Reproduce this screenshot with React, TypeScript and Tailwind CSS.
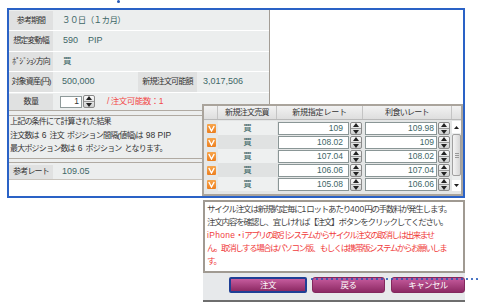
import React from 'react';

const font = "font-['Liberation_Sans','Noto_Sans_CJK_JP',sans-serif]";

function Spin({ className = '' }: { className?: string }) {
  return (
    <span className={`flex flex-col items-center justify-center rounded-[2px] border border-[#8a8a8a] bg-gradient-to-b from-[#fafafa] to-[#cfd1d1] ${className}`}>
      <svg width="6" height="4" viewBox="0 0 6 4"><path d="M3 0 L6 4 L0 4 Z" fill="#222" /></svg>
      <span className="my-[1px] h-px w-full bg-[#9a9a9a]" />
      <svg width="6" height="4" viewBox="0 0 6 4"><path d="M0 0 L6 0 L3 4 Z" fill="#222" /></svg>
    </span>
  );
}

function Check() {
  return (
    <span className="flex h-[9px] w-[9px] items-center justify-center rounded-[1px] bg-gradient-to-b from-[#f7a64c] to-[#ec7e1c]">
      <svg width="7" height="7" viewBox="0 0 7 7">
        <path d="M0.8 1 L3.5 6 L6.2 1" stroke="#fff" strokeWidth="1.4" fill="none" />
      </svg>
    </span>
  );
}

function Row({ label, h, children }: { label: string; h: string; children: React.ReactNode }) {
  return (
    <div className={`flex border-b border-white ${h}`}>
      <div className="flex w-[44px] items-center justify-center bg-[#e0e1e1] text-[8px] tracking-[-0.9px] text-[#333]">{label}</div>
      {children}
    </div>
  );
}

// latin text inside tightly tracked japanese lines
function N({ children, className = '' }: { children: React.ReactNode; className?: string }) {
  return <span className={`tracking-normal ${className}`}>{children}</span>;
}

const rows = [
  ['109', '109.98'],
  ['108.02', '109'],
  ['107.04', '108.02'],
  ['106.06', '107.04'],
  ['105.08', '106.06'],
];

export default function App() {
  return (
    <div className={`relative h-[308px] w-[478px] overflow-hidden bg-white pl-[7px] pt-[8px] ${font}`}>
      {/* dot at top */}
      <span className="absolute left-[117px] top-0 h-[3px] w-[3px] rounded-full bg-[#2458b8]" />

      {/* blue frame */}
      <div className="relative h-[190px] w-[458px] border-2 border-[#2a62c6]">
        {/* left form panel */}
        <div className="w-[261px] border-r border-[#a39d95] bg-[#eceeee] pt-[1px]">
          <Row label="参考期間" h="h-[20px]">
            <div className="flex items-center pl-[9px] text-[8.5px] tracking-[-0.6px] text-[#3e6767]">３０日（１カ月）</div>
          </Row>
          <Row label="想定変動幅" h="h-[21px]">
            <div className="flex items-center pl-[10px] text-[9px] text-[#3e6767]">
              590<span className="ml-[10px]">PIP</span>
            </div>
          </Row>
          <Row label="ﾎﾟｼﾞｼｮﾝ方向" h="h-[20px]">
            <div className="flex items-center pl-[10px] text-[8.5px] text-[#3e6767]">買</div>
          </Row>
          <Row label="対象資産(円)" h="h-[21px]">
            <div className="flex w-[85px] items-center pl-[9px] text-[9px] text-[#3e6767]">500,000</div>
            <div className="flex w-[59px] items-center justify-center bg-[#e0e1e1] text-[8px] tracking-[-0.8px] text-[#333]">新規注文可能額</div>
            <div className="flex items-center pl-[6px] text-[9px] text-[#3e6767]">3,017,506</div>
          </Row>
          <div className="flex h-[17px] items-center">
            <div className="flex h-[16px] w-[44px] items-center justify-center bg-[#e0e1e1] text-[8px] tracking-[-0.6px] text-[#333]">数量</div>
            <div className="ml-[7px] flex h-[12px] w-[22px] items-center justify-end border border-[#8f9a9a] bg-white pr-[2px] text-[8.5px] text-[#333]">1</div>
            <Spin className="ml-[1px] h-[13px] w-[12px]" />
            <span className="ml-[12px] text-[8.5px] tracking-[-0.5px] text-[#f24a4a]">/ 注文可能数：1</span>
          </div>
          <div className="border-t border-[#b0aaa2]" />
          <div className="mt-[4px] border-t border-[#b0aaa2] pl-[1px] text-[8px] leading-[12.5px] tracking-[-0.8px] text-[#333]">
            <div>上記の条件にて計算された結果</div>
            <div>注文数は<N className="mx-[3px] text-[8.5px]">6</N>注文<span className="ml-[3px]">ポジション間隔(値幅)は</span><N className="mx-[3px] text-[8.5px]">98 PIP</N></div>
            <div>最大ポジション数は<N className="mx-[3px] text-[8.5px]">6</N>ポジション<span className="ml-[3px]">となります。</span></div>
          </div>
          <div className="mt-[2px] border-t border-[#b0aaa2]" />
          <div className="mt-[3px] flex h-[17px] border-t border-[#b0aaa2] pt-[2px]">
            <div className="flex w-[44px] items-center justify-center bg-[#e0e1e1] text-[8px] tracking-[-0.8px] text-[#333]">参考レート</div>
            <div className="flex items-center pl-[9px] text-[9px] text-[#3e6767]">109.05</div>
          </div>
          <div className="h-[1px] border-b border-[#c9c4bd]" />
        </div>

        {/* table overlay */}
        <div className="absolute left-[193px] top-[94px] h-[92px] w-[261px] border-2 border-[#aaa49c] bg-[#e4e6e6] text-[#333]">
          <div className="flex h-[14px] border-b border-[#b9b9b9] bg-gradient-to-b from-[#f2f2f2] to-[#dedede] text-[8px] tracking-[-0.7px]">
            <div className="w-[14px] border-r border-[#c4c4c4]" />
            <div className="flex w-[59px] items-center justify-center border-r border-[#c4c4c4]">新規注文売買</div>
            <div className="flex w-[86px] items-center justify-center border-r border-[#c4c4c4] tracking-[-0.2px]">新規指定レート</div>
            <div className="flex w-[89px] items-center justify-center border-r border-[#c4c4c4]">利食いレート</div>
            <div className="flex-1" />
          </div>
          <div className="flex pt-[1px]">
            <div className="flex flex-col">
              {rows.map((r, i) => (
                <div key={i} className="flex h-[14px] items-center">
                  <div className="flex h-full w-[14px] items-center justify-center bg-[#e6e8e8]"><Check /></div>
                  <div className={`flex h-full w-[59px] items-center justify-center text-[8.5px] text-[#3e6767] ${i % 2 ? 'bg-[#e0e2e2]' : 'bg-[#eef0f0]'}`}>買</div>
                  <div className="flex h-full w-[86px] items-center">
                    <div className="ml-[1px] flex h-[13px] w-[71px] items-center justify-end border border-[#8a9696] bg-white pr-[5px] text-[8.5px] text-[#3e6767]">{r[0]}</div>
                    <Spin className="ml-[1px] h-[13px] w-[12px]" />
                  </div>
                  <div className="flex h-full w-[89px] items-center">
                    <div className="ml-[2px] flex h-[13px] w-[72px] items-center justify-end border border-[#8a9696] bg-white pr-[2px] text-[8.5px] text-[#3e6767]">{r[1]}</div>
                    <Spin className="ml-[1px] h-[13px] w-[12px]" />
                  </div>
                </div>
              ))}
            </div>
            <div className="flex w-[9px] flex-col items-stretch bg-[#eceeee]">
              <div className="flex h-[12px] items-center justify-center bg-white">
                <svg width="5" height="3" viewBox="0 0 5 3"><path d="M2.5 0 L5 3 L0 3 Z" fill="#222" /></svg>
              </div>
              <div className="mt-[1px] flex h-[42px] flex-col items-center justify-center gap-[1px] rounded-[2px] border border-[#a0a0a0] bg-gradient-to-r from-[#f4f4f4] to-[#d6d6d6]">
                <span className="h-px w-[4px] bg-[#999]" />
                <span className="h-px w-[4px] bg-[#999]" />
                <span className="h-px w-[4px] bg-[#999]" />
              </div>
              <div className="flex-1" />
              <div className="flex h-[11px] items-center justify-center bg-white">
                <svg width="5" height="3" viewBox="0 0 5 3"><path d="M0 0 L5 0 L2.5 3 Z" fill="#222" /></svg>
              </div>
            </div>
          </div>
        </div>
      </div>

      {/* notice + buttons */}
      <div className="ml-[196px] mt-[2px] w-[262px]">
        <div className="h-[73px] border-2 border-[#a09a92] bg-white pl-[2px] pt-[1px] text-[8.5px] leading-[13px] tracking-[-1.2px] whitespace-nowrap">
          <div className="text-[#444]">サイクル注文は新規約定毎に<N>1</N>ロットあたり<N>400</N>円の手数料が発生します。</div>
          <div className="text-[#444]">注文内容を確認し、宜しければ【注文】ボタンをクリックしてください。</div>
          <div className="tracking-[-1.45px] text-[#f03c3c]"><span className="tracking-[0.3px]">iPhone</span>・<N>i</N>アプリの取引システムからサイクル注文の取消しは出来ませ</div>
          <div className="tracking-[-1.45px] text-[#f03c3c]">ん。取消しする場合はパソコン版、もしくは携帯版システムからお願いしま</div>
          <div className="text-[#f03c3c]">す。</div>
        </div>
        <div className="flex h-[29px] items-start gap-[5px] border-b-2 border-[#6e6e6e] bg-[#e7e9eb] pl-[26px] pt-[4px] text-[8.5px] tracking-[-0.6px] text-white">
          <button className="flex h-[16px] w-[78px] items-center justify-center rounded-[2px] border-2 border-[#1f3f95] bg-gradient-to-b from-[#c65c9e] to-[#8d2964]">注文</button>
          <button className="flex h-[16px] w-[73px] items-center justify-center rounded-[3px] border border-[#83285d] bg-gradient-to-b from-[#c65c9e] to-[#8d2964]">戻る</button>
          <button className="ml-[1px] flex h-[16px] w-[74px] items-center justify-center rounded-[3px] border border-[#83285d] bg-gradient-to-b from-[#c65c9e] to-[#8d2964]">キャンセル</button>
        </div>
      </div>

      {/* dotted connector */}
      <svg className="absolute left-[311px] top-[277px]" width="167" height="4" viewBox="0 0 167 4">
        <line x1="1" y1="2" x2="167" y2="2" stroke="#2458b8" strokeWidth="2.2" strokeLinecap="round" strokeDasharray="0 5" />
      </svg>
    </div>
  );
}
